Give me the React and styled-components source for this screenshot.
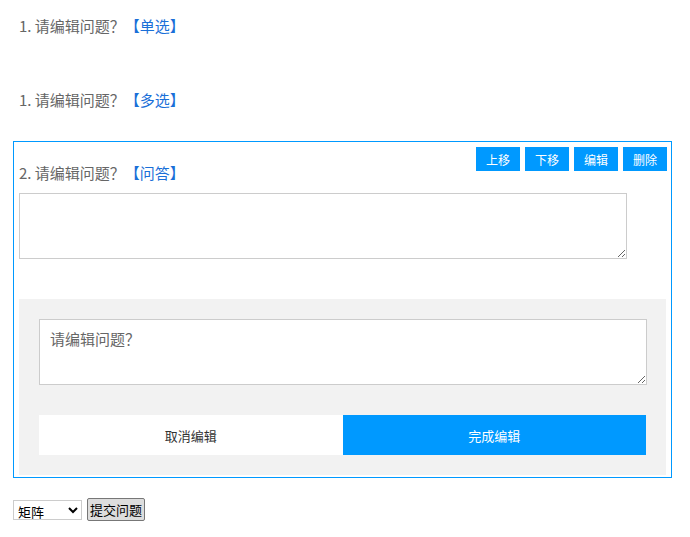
import React from "react";
import styled, { createGlobalStyle } from "styled-components";

const G = createGlobalStyle`
  body { margin: 0; font-family: "Noto Sans CJK SC", "Liberation Sans", sans-serif; background:#fff; }
`;
const Page = styled.div` padding: 0 18px 0 13px; width: 659px; `;
const Q = styled.div`
  padding: ${p => p.$pt}px 6px 0;
  font-size: 15px; line-height: 20px; color: #666; height: ${p => p.$h}px;
`;
const Tag = styled.span` color: #1a6fd8; `;
const Box = styled.div`
  border: 1px solid #0099ff; position: relative; padding: 0 5px 0 5px; height: 335px;
`;
const Tools = styled.div` position: absolute; top: 5px; right: 4px; display: flex; gap: 5px; `;
const Tool = styled.button`
  width: 44px; height: 24px; border: 0; background: #0099ff; color: #fff;
  font-size: 12px; font-family: inherit; padding: 0;
`;
const Title = styled.div` padding-top: 21px; font-size: 15px; line-height: 20px; color: #666; `;
const Area = styled.textarea`
  display: block; box-sizing: border-box; width: ${p => p.$w}px; height: 66px;
  border: 1px solid #ccc; margin: ${p => p.$m}; font-family: inherit; font-size: 15px;
  color: #666; padding: 8px 10px; resize: vertical; background: #fff; outline: none;
  &::placeholder { color: #666; }
`;
const Panel = styled.div` background: #f2f2f2; margin-top: 40px; padding: 20px 20px 0; height: 156px; `;
const Actions = styled.div` display: flex; margin-top: 30px; `;
const Act = styled.button`
  flex: 1; height: 40px; border: 0; font-family: inherit; font-size: 13px;
  background: ${p => p.$primary ? "#0099ff" : "#fff"}; color: ${p => p.$primary ? "#fff" : "#333"};
`;
const Foot = styled.div` margin-top: 20px; display: flex; align-items: center; gap: 5px; `;
const Sel = styled.select` width: 69px; height: 20px; font-size: 13px; font-family: inherit; padding: 0; border: 1px solid #ccc; background: #fff; `;
const Submit = styled.button` height: 23px; font-size: 13px; font-family: inherit; padding: 0 2px; border: 1px solid #777; border-radius: 2px; background: #ddd; color: #000; `;

export default function App() {
  return (
    <Page>
      <G />
      <Q $pt={16} $h={74}>1. 请编辑问题？<Tag>【单选】</Tag></Q>
      <Q $pt={0} $h={51}>1. 请编辑问题？<Tag>【多选】</Tag></Q>
      <Box>
        <Tools>
          <Tool>上移</Tool><Tool>下移</Tool><Tool>编辑</Tool><Tool>删除</Tool>
        </Tools>
        <Title>2. 请编辑问题？<Tag>【问答】</Tag></Title>
        <Area $w={608} $m="10px 0 0" />
        <Panel>
          <Area $w={608} $m="0" placeholder="请编辑问题？" />
          <Actions>
            <Act>取消编辑</Act>
            <Act $primary>完成编辑</Act>
          </Actions>
        </Panel>
      </Box>
      <Foot>
        <Sel><option>矩阵</option></Sel>
        <Submit>提交问题</Submit>
      </Foot>
    </Page>
  );
}
